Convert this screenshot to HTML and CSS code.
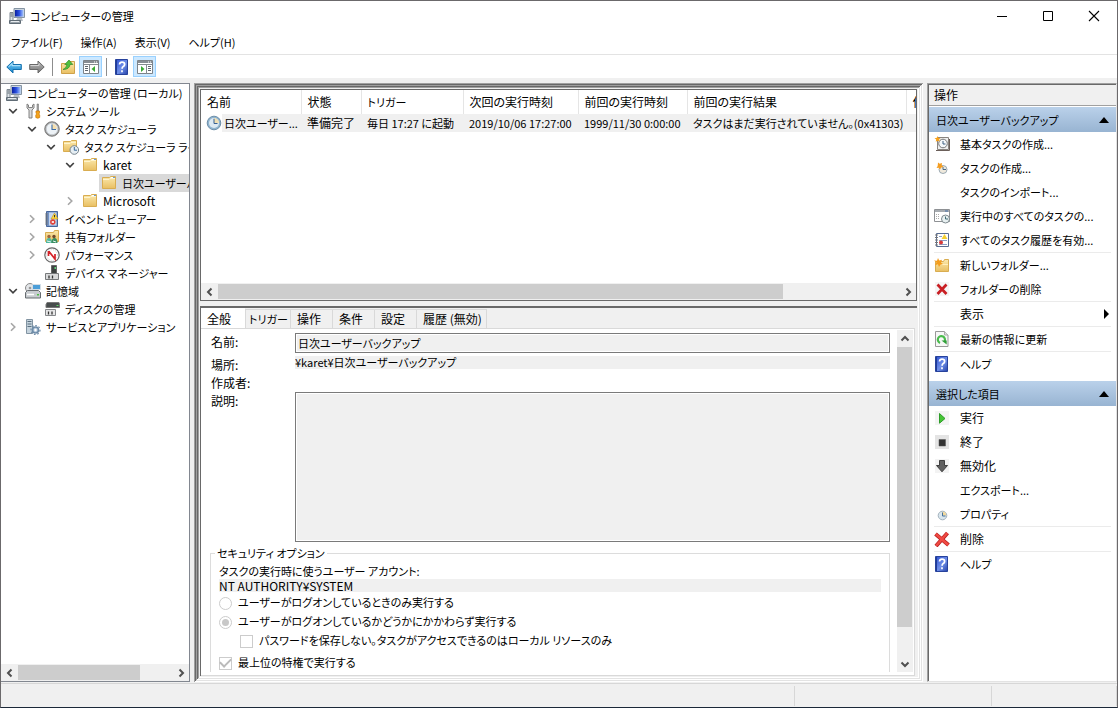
FILE: index.html
```html
<!DOCTYPE html>
<html lang="ja">
<head>
<meta charset="utf-8">
<title>コンピューターの管理</title>
<link rel="stylesheet" href="styles.css">
</head>
<body>
<svg class="defs" aria-hidden="true">
  <defs>
    <linearGradient id="g-folder" x1="0" y1="0" x2="0" y2="1"><stop offset="0" stop-color="#fbe9ad"/><stop offset="1" stop-color="#e9bf62"/></linearGradient>
    <linearGradient id="g-blue" x1="0" y1="0" x2="1" y2="1"><stop offset="0" stop-color="#2b4ed0"/><stop offset=".55" stop-color="#6f8fe8"/><stop offset="1" stop-color="#2442a8"/></linearGradient>
    <linearGradient id="g-screen" x1="0" y1="0" x2="1" y2="0"><stop offset="0" stop-color="#0a1fa0"/><stop offset=".5" stop-color="#2a50e0"/><stop offset="1" stop-color="#a8c8ff"/></linearGradient>
    <linearGradient id="g-arrow" x1="0" y1="0" x2="0" y2="1"><stop offset="0" stop-color="#7cd0f5"/><stop offset="1" stop-color="#1583cc"/></linearGradient>
    <linearGradient id="g-grey" x1="0" y1="0" x2="0" y2="1"><stop offset="0" stop-color="#b8b8b8"/><stop offset="1" stop-color="#777"/></linearGradient>
  </defs>
  <symbol id="computer" viewBox="0 0 16 16"><path d="M5 .5h10.500v9H5z" fill="#c9d3dc" stroke="#8594a3"/><path d="M6 2h8.500v6.500H6z" fill="url(#g-screen)"/><path d="M1 4.500h3v8H1z" fill="#dfe4e8" stroke="#7d8790"/><path d="M1.500 6h2M1.500 8h2" stroke="#59636c"/><path d="M8 10h5l1 3H7z" fill="#b9c0c7"/><path d="M.5 12.500h11v3H.5z" fill="#98a2aa" stroke="#5f6b75"/><path d="M2 13.500h8" stroke="#e7ebee"/></symbol>
  <symbol id="tools" viewBox="0 0 16 16"><path d="M2 1v4l2 2v8h3V7l2-2V1L7.500 2v2.500h-4V2z" fill="#dadada" stroke="#777" stroke-width=".9"/><path d="M12 1h1.500v7H12z" fill="#aaa" stroke="#666" stroke-width=".5"/><path d="M11 8h3.500v2l-.7 1 .9 1v2.500q-1.900 1.500-3.900 0V12l.9-1-.7-1z" fill="#f5a41c" stroke="#c97708" stroke-width=".7"/></symbol>
  <symbol id="clock" viewBox="0 0 16 16"><circle cx="8" cy="8" r="7.300" fill="#9b9b9b" stroke="#6f6f6f" stroke-width=".8"/><circle cx="8" cy="8" r="5.800" fill="#edf2f6" stroke="#c8cdd1"/><path d="M8 8V3a5 5 0 0 1 5 5z" fill="#f6dfae"/><path d="M8 3.500V8.500h4" fill="none" stroke="#3d6da8" stroke-width="1.100"/></symbol>
  <symbol id="clock-blue" viewBox="0 0 16 16"><circle cx="8" cy="8" r="6.800" fill="#8fb4cf" stroke="#6d8ea9"/><circle cx="8" cy="8" r="5" fill="#dce9f3"/><path d="M8 8V3a5 5 0 0 1 5 5z" fill="#efdfb4"/><path d="M8 3.800V8.500h3.500" fill="none" stroke="#355f92"/></symbol>
  <symbol id="folder" viewBox="0 0 16 16"><path d="M1.500 2.500h7l1-1h5v12h-13z" fill="url(#g-folder)" stroke="#d9ad51"/><path d="M2 4.500h6l1-1h5" fill="none" stroke="#fff4cc"/><path d="M10 2.500h4" stroke="#fff"/><path d="M12 2.500h2" stroke="#6b9bd0"/></symbol>
  <symbol id="folder-clock" viewBox="0 0 16 16"><path d="M.5 2.500h7l1-1h5v11H.5z" fill="url(#g-folder)" stroke="#d9ad51"/><path d="M1 4.500h6l1-1h5" fill="none" stroke="#fff4cc"/><circle cx="11.300" cy="11" r="4.300" fill="#e6eef3" stroke="#78858e"/><path d="M11.300 8v3.200H14" fill="none" stroke="#386899"/></symbol>
  <symbol id="events" viewBox="0 0 16 16"><path d="M2.500.5h11v15h-11z" fill="#7293c7" stroke="#46669c"/><path d="M5 1.500h7.500v13H5z" fill="#c4d5ee"/><path d="M1 3h3M1 5h3M1 7h3M1 9h3M1 11h3M1 13h3" stroke="#777" stroke-width=".9"/><path d="M10.500 2l3.500 6H7z" fill="#ffd83b" stroke="#b8962a" stroke-width=".6"/><path d="M10.500 4v2.300" stroke="#333"/><circle cx="8.800" cy="11" r="2.700" fill="#df3c35"/><path d="M7.700 9.900l2.200 2.200m0-2.200l-2.200 2.200" stroke="#fff"/></symbol>
  <symbol id="shared" viewBox="0 0 16 16"><path d="M1.500 3.500h8l1-2h4v11h-13z" fill="url(#g-folder)" stroke="#d9ad51"/><circle cx="5" cy="7.500" r="1.700" fill="#9f683f"/><circle cx="10" cy="7.500" r="1.700" fill="#6f4a2c"/><path d="M2 14q0-5 3-5t3 5z" fill="#4fb7a0"/><path d="M7.500 14q0-5 3-5t3 5z" fill="#3a8e62"/><path d="M3 12l4 1m2-1l3 1" stroke="#e7f6f0"/></symbol>
  <symbol id="gauge" viewBox="0 0 16 16"><circle cx="8" cy="8" r="7.200" fill="#fff" stroke="#666" stroke-width="1.200"/><circle cx="8" cy="8" r="5.400" fill="none" stroke="#ccc" stroke-dasharray="1 1"/><path d="M4.500 4v5M5 4.500L11 12V7" fill="none" stroke="#d42228" stroke-width="1.700"/></symbol>
  <symbol id="device" viewBox="0 0 16 16"><path d="M7.500.5h5v8h-5z" fill="#3d4140" stroke="#666"/><path d="M10.500 2h1.500v2h-1.500z" fill="#64d17b"/><path d="M1.500 8.500h13v6h-13z" fill="#d9dadb" stroke="#77797b"/><path d="M5 10.500v3M8.500 10.500v3" stroke="#333" stroke-width="1.300"/></symbol>
  <symbol id="storage" viewBox="0 0 16 16"><circle cx="5" cy="5" r="4.500" fill="#e2e5e8" stroke="#888"/><circle cx="5" cy="5" r="1.300" fill="#999"/><path d="M7.500 1.500h8v5h-8z" fill="#4c9ed8" stroke="#d4dde4"/><path d="M.5 9.500l2-2h11l2 2v5.500H.5z" fill="#c8ccd0" stroke="#676c70"/><path d="M2 11.500h7" stroke="#fff" stroke-width="1.500"/><path d="M12 11h2v1.500h-2z" fill="#4bbd43"/></symbol>
  <symbol id="disk" viewBox="0 0 16 16"><path d="M2 3.500l1-2h12l.5 2v3H2z" fill="#484c4d" stroke="#777"/><path d="M12.500 4.500h2" stroke="#5fd865"/><path d="M1.500 8.500h10v6h-10z" fill="#e5e5e6" stroke="#85878a"/><path d="M4.500 10.500v3M8 10.500v3" stroke="#333" stroke-width="1.300"/></symbol>
  <symbol id="services" viewBox="0 0 16 16"><path d="M1.500.5h6v14h-6z" fill="#c5d3dd" stroke="#8294a2"/><path d="M2.500 2.500h4M2.500 5h4M2.500 7.500h4" stroke="#5b7080"/><circle cx="10.500" cy="11" r="3" fill="#b6cadd" stroke="#6e8ca8" stroke-width="1.600"/><circle cx="10.500" cy="11" r="4.500" fill="none" stroke="#6e8ca8" stroke-width="1.200" stroke-dasharray="1.700 1.700"/><circle cx="10.500" cy="11" r="1.200" fill="#fff"/></symbol>
  <symbol id="down" viewBox="0 0 12 12"><path d="M2.200 4L6 7.800 9.800 4" fill="none" stroke="#404040" stroke-width="1.700"/></symbol>
  <symbol id="right" viewBox="0 0 12 12"><path d="M4 2.200L7.800 6 4 9.800" fill="none" stroke="#a6a6a6" stroke-width="1.600"/></symbol>
  <symbol id="back" viewBox="0 0 16 16"><path d="M.8 8L7 2v3.500h8.300v5H7V14z" fill="url(#g-arrow)" stroke="#1570ad"/><path d="M2.800 7.800L6 4.500v2.200h8.300" fill="none" stroke="#b9e8ff"/></symbol>
  <symbol id="forward" viewBox="0 0 16 16"><path d="M15.200 8L9 2v3.500H.7v5H9V14z" fill="url(#g-grey)" stroke="#686868"/><path d="M1.500 6.500H10V4.500" fill="none" stroke="#d5d5d5"/></symbol>
  <symbol id="up" viewBox="0 0 16 16"><path d="M1.500 4.500h7l1.500-2h4.500v12h-13z" fill="url(#g-folder)" stroke="#cfa24a"/><path d="M3 10.500q3.500-1.500 4-5H4.800L9 1l3.800 4.500H10q-.5 5-7 5z" fill="#4fc03e" stroke="#318a27" stroke-width=".7"/></symbol>
  <symbol id="pane-left" viewBox="0 0 16 14"><path d="M.5.5h15v13H.5z" fill="#fff" stroke="#7d8389"/><path d="M1 2h14" stroke="#878d94" stroke-width="2"/><path d="M11 2h1m1 0h1" stroke="#fff"/><path d="M1 4.500h14M6.500 5v9" stroke="#858b91"/><path d="M2 6.500h3M2 8.500h3M2 10.500h3" stroke="#5e666e"/><path d="M12 6v6L8.500 9z" fill="#3aa935"/></symbol>
  <symbol id="pane-right" viewBox="0 0 16 14"><path d="M.5.5h15v13H.5z" fill="#fff" stroke="#7d8389"/><path d="M1 2h14" stroke="#878d94" stroke-width="2"/><path d="M11 2h1m1 0h1" stroke="#fff"/><path d="M1 4.500h14M9.500 5v9" stroke="#858b91"/><path d="M11 6.500h3M11 8.500h3M11 10.500h3" stroke="#5e666e"/><path d="M4 6v6L7.500 9z" fill="#3aa935"/></symbol>
  <symbol id="help" viewBox="0 0 16 16"><path d="M1.500.5h12v15h-12z" fill="url(#g-blue)" stroke="#27429c"/><path d="M2.500 1v14" stroke="#203c96"/><path d="M5.500 5.500Q5.700 3.200 8 3.200q2.600 0 2.600 2.200 0 1.400-1.400 2.100-1.100.6-1.100 2.300M8 11.300v2" fill="none" stroke="#fff" stroke-width="1.700"/></symbol>
  <symbol id="basic-task" viewBox="0 0 16 16"><path d="M3.500 1.500h11v12h-11z" fill="#efefef" stroke="#8a8580"/><path d="M2 14.500h13.500V3" fill="none" stroke="#6b5f59"/><circle cx="9" cy="7.500" r="4.300" fill="#f5f8fa" stroke="#777"/><path d="M9 5v3h2.500" fill="none" stroke="#3c5e80"/><path d="M3.500 0l.9 1.900 2.100.1-1.400 1.600.6 2.100-2-1-2 1 .5-2.100L.5 2l2.100-.1z" fill="#f8a21b"/></symbol>
  <symbol id="new-task" viewBox="0 0 16 16"><circle cx="9" cy="9.500" r="4" fill="#efe9dc" stroke="#9baab4"/><path d="M9 7v2.500h3" fill="none" stroke="#476887"/><path d="M4 2.500l1.700 1.200L8 3l-.3 2.200L9.500 7l-2.400.5L6 9.500 4.700 7.700 2.500 8l1.200-2z" fill="#f49d21"/></symbol>
  <symbol id="running" viewBox="0 0 16 16"><path d="M.5 1.500h15v12H.5z" fill="#fff" stroke="#8e9194"/><path d="M1 3h14" stroke="#a6abb0" stroke-width="2"/><path d="M11 3h3" stroke="#4871a8"/><path d="M2 6.500h4M2 8.500h4M2 10.500h4" stroke="#aaa" stroke-dasharray="1 1"/><circle cx="11.500" cy="11" r="4" fill="#e8f0f1" stroke="#7d898e"/><path d="M11.500 8.500V11H14" fill="none" stroke="#3f6b75"/></symbol>
  <symbol id="history" viewBox="0 0 16 16"><path d="M2.500 1.500h12v13h-12z" fill="#fff" stroke="#596d92"/><path d="M1 3h3M1 5.500h3M1 8h3M1 10.500h3M1 13h3" stroke="#777"/><path d="M5 4.500h3M5 8.500h8M5 12.500h8" stroke="#8a9dc4"/><path d="M10.500 2l3 5h-6z" fill="#f4cf30"/><circle cx="7" cy="10.500" r="2" fill="#d83a3a"/></symbol>
  <symbol id="new-folder" viewBox="0 0 16 16"><path d="M1.500 4.500h8l1-2h4v12h-13z" fill="url(#g-folder)" stroke="#d9ad51"/><path d="M3 7.500h11" stroke="#fff0bd"/><path d="M4 1l1.200 2.500L8 2.800 7 5.500l2 1.500-2.600.7L5 10 4 7.500 1 8l1.500-2.500L0 3.500l3 .2z" fill="#f49d1d"/></symbol>
  <symbol id="x-small" viewBox="0 0 16 16"><path d="M1 1h14v14H1z" fill="#f5f5f5"/><path d="M3.500 3.500l9 9.500m0-9.500l-9 9.500" stroke="#c91f24" stroke-width="2.700"/></symbol>
  <symbol id="x-large" viewBox="0 0 16 16"><path d="M1.500 3l13 11m-1-12L2 15" stroke="#b72020" stroke-width="4"/><path d="M1.800 3l12.500 11m-1-12L2.200 14.700" stroke="#f04a43" stroke-width="2.500"/></symbol>
  <symbol id="refresh" viewBox="0 0 16 16"><path d="M1.500.5h9l3.500 3.500v11.500H1.500z" fill="#f7f7f7" stroke="#999"/><path d="M10.500.5V4H14" fill="#ddd" stroke="#aaa"/><path d="M6 12A3.600 3.600 0 1 1 10.500 10.500" fill="none" stroke="#4abb4d" stroke-width="2.200"/><path d="M7.500 9.500h5.200v4z" fill="#2f9e38"/></symbol>
  <symbol id="play" viewBox="0 0 16 16"><path d="M1 1h14v14H1z" fill="#f3f4f3"/><path d="M5.500 3.500L11 8.500l-5.500 4.700z" fill="#44c534" stroke="#2d9c28"/></symbol>
  <symbol id="stop" viewBox="0 0 16 16"><path d="M1 1h14v14H1z" fill="#e4e4e4"/><path d="M5 5.500h6.500V12H5z" fill="#333" stroke="#555" stroke-width=".5"/></symbol>
  <symbol id="disable" viewBox="0 0 16 16"><path d="M1 1h14v14H1z" fill="#f3f3f3"/><path d="M5.500 2.500h5v5h3L8 13.800 2.500 7.500h3z" fill="#606060" stroke="#3f3f3f"/></symbol>
  <symbol id="properties" viewBox="0 0 16 16"><circle cx="8.500" cy="9.500" r="4.300" fill="#d9e6ee" stroke="#a3b2bd"/><path d="M8.500 9.500V5.800a3.700 3.700 0 0 1 3.700 3.700z" fill="#f3d99b"/><path d="M8.500 6.500v3.500h3" fill="none" stroke="#44719d"/></symbol>
</svg>

<div class="window">
  <header class="titlebar">
    <svg class="icon"><use href="#computer"/></svg>
    <h1>コンピューターの管理</h1>
    <div class="caption">
      <button aria-label="最小化"><svg viewBox="0 0 12 12"><path d="M1 6.500h10" stroke="#000"/></svg></button>
      <button aria-label="最大化"><svg viewBox="0 0 12 12"><path d="M1.500 1.500h9v9h-9z" fill="none" stroke="#000"/></svg></button>
      <button aria-label="閉じる"><svg viewBox="0 0 12 12"><path d="M1 1l10 10M11 1L1 11" stroke="#000" stroke-width="1.100"/></svg></button>
    </div>
  </header>
  <nav class="menubar">
    <button>ファイル(F)</button><button>操作(A)</button><button>表示(V)</button><button>ヘルプ(H)</button>
  </nav>
  <div class="toolbar">
    <button aria-label="戻る"><svg class="icon"><use href="#back"/></svg></button>
    <button aria-label="進む"><svg class="icon"><use href="#forward"/></svg></button>
    <span class="rule"></span>
    <button aria-label="上へ"><svg class="icon"><use href="#up"/></svg></button>
    <button class="on" aria-label="ツリーの表示"><svg class="icon"><use href="#pane-left"/></svg></button>
    <span class="rule"></span>
    <button aria-label="ヘルプ"><svg class="icon"><use href="#help"/></svg></button>
    <button class="on" aria-label="操作ウィンドウの表示"><svg class="icon"><use href="#pane-right"/></svg></button>
  </div>

  <main class="panes">
    <aside class="tree-pane">
      <ul class="tree">
        <li class="l0"><svg class="icon"><use href="#computer"/></svg><span>コンピューターの管理 (ローカル)</span></li>
        <li class="l1"><svg class="chev"><use href="#down"/></svg><svg class="icon"><use href="#tools"/></svg><span>システム ツール</span></li>
        <li class="l2"><svg class="chev"><use href="#down"/></svg><svg class="icon"><use href="#clock"/></svg><span>タスク スケジューラ</span></li>
        <li class="l3"><svg class="chev"><use href="#down"/></svg><svg class="icon"><use href="#folder-clock"/></svg><span>タスク スケジューラ ライブラリ</span></li>
        <li class="l4"><svg class="chev"><use href="#down"/></svg><svg class="icon"><use href="#folder"/></svg><span class="latin">karet</span></li>
        <li class="l5"><div class="selected"><svg class="icon"><use href="#folder"/></svg><span>日次ユーザーバックアップ</span></div></li>
        <li class="l4"><svg class="chev"><use href="#right"/></svg><svg class="icon"><use href="#folder"/></svg><span class="latin">Microsoft</span></li>
        <li class="l2"><svg class="chev"><use href="#right"/></svg><svg class="icon"><use href="#events"/></svg><span>イベント ビューアー</span></li>
        <li class="l2"><svg class="chev"><use href="#right"/></svg><svg class="icon"><use href="#shared"/></svg><span>共有フォルダー</span></li>
        <li class="l2"><svg class="chev"><use href="#right"/></svg><svg class="icon"><use href="#gauge"/></svg><span>パフォーマンス</span></li>
        <li class="l2"><i class="chev"></i><svg class="icon"><use href="#device"/></svg><span>デバイス マネージャー</span></li>
        <li class="l1"><svg class="chev"><use href="#down"/></svg><svg class="icon"><use href="#storage"/></svg><span>記憶域</span></li>
        <li class="l2"><i class="chev"></i><svg class="icon"><use href="#disk"/></svg><span>ディスクの管理</span></li>
        <li class="l1"><svg class="chev"><use href="#right"/></svg><svg class="icon"><use href="#services"/></svg><span>サービスとアプリケーション</span></li>
      </ul>
      <div class="hscroll">
        <button aria-label="左へ"><svg viewBox="0 0 12 12"><path d="M7.500 2.500L4 6l3.500 3.500"/></svg></button>
        <div class="track"><div class="thumb tree-thumb"></div></div>
        <button aria-label="右へ"><svg viewBox="0 0 12 12"><path d="M4.500 2.500L8 6 4.500 9.500"/></svg></button>
      </div>
    </aside>

    <section class="center">
      <div class="list">
        <div class="list-view">
          <table>
            <colgroup><col class="c-name"><col class="c-state"><col class="c-trigger"><col class="c-next"><col class="c-last"><col class="c-result"><col class="c-author"></colgroup>
            <thead><tr><th>名前</th><th>状態</th><th class="kana">トリガー</th><th>次回の実行時刻</th><th>前回の実行時刻</th><th>前回の実行結果</th><th>作成者</th></tr></thead>
            <tbody><tr><td class="name"><div><svg class="icon"><use href="#clock-blue"/></svg><span>日次ユーザー...</span></div></td><td>準備完了</td><td class="kana">毎日 17:27 に起動</td><td class="kana">2019/10/06 17:27:00</td><td class="kana">1999/11/30 0:00:00</td><td class="kana">タスクはまだ実行されていません。(0x41303)</td><td></td></tr></tbody>
          </table>
        </div>
        <div class="hscroll">
          <button aria-label="左へ"><svg viewBox="0 0 12 12"><path d="M7.500 2.500L4 6l3.500 3.500"/></svg></button>
          <div class="track"><div class="thumb list-thumb"></div></div>
          <button aria-label="右へ"><svg viewBox="0 0 12 12"><path d="M4.500 2.500L8 6 4.500 9.500"/></svg></button>
        </div>
      </div>
      <div class="detail">
        <div class="tabs" role="tablist">
          <button role="tab" class="active" aria-selected="true">全般</button><button role="tab" class="kana">トリガー</button><button role="tab">操作</button><button role="tab">条件</button><button role="tab">設定</button><button role="tab">履歴 (無効)</button>
        </div>
        <div class="tab-page">
          <form class="general">
            <div class="fields">
              <label for="f-name">名前:</label><input id="f-name" class="box" type="text" readonly value="日次ユーザーバックアップ">
              <label for="f-loc">場所:</label><input id="f-loc" class="flat" type="text" readonly value="¥karet¥日次ユーザーバックアップ">
              <span>作成者:</span><span></span>
              <label for="f-desc">説明:</label><textarea id="f-desc" class="box" readonly></textarea>
            </div>
            <fieldset>
              <legend>セキュリティ オプション</legend>
              <label class="account" for="f-acc">タスクの実行時に使うユーザー アカウント:</label>
              <input id="f-acc" class="flat latin" type="text" readonly value="NT AUTHORITY¥SYSTEM">
              <label class="opt"><input type="radio" name="logon" disabled><span>ユーザーがログオンしているときのみ実行する</span></label>
              <label class="opt"><input type="radio" name="logon" checked disabled><span>ユーザーがログオンしているかどうかにかかわらず実行する</span></label>
              <label class="opt nested"><input type="checkbox" disabled><span>パスワードを保存しない。タスクがアクセスできるのはローカル リソースのみ</span></label>
              <label class="opt top"><input type="checkbox" checked disabled><span>最上位の特権で実行する</span></label>
            </fieldset>
          </form>
          <div class="vscroll">
            <button type="button" aria-label="上へ"><svg viewBox="0 0 12 12"><path d="M2.500 7.500L6 4l3.500 3.500"/></svg></button>
            <div class="track"><div class="thumb page-thumb"></div></div>
            <button type="button" aria-label="下へ"><svg viewBox="0 0 12 12"><path d="M2.500 4.500L6 8l3.500-3.500"/></svg></button>
          </div>
        </div>
      </div>
    </section>

    <aside class="actions">
      <h2>操作</h2>
      <h3><span>日次ユーザーバックアップ</span><svg viewBox="0 0 10 6"><path d="M5 0l5 6H0z"/></svg></h3>
      <div class="group">
        <button><svg class="icon"><use href="#basic-task"/></svg>基本タスクの作成...</button>
        <button><svg class="icon"><use href="#new-task"/></svg>タスクの作成...</button>
        <button><i class="icon"></i>タスクのインポート...</button>
        <button><svg class="icon"><use href="#running"/></svg>実行中のすべてのタスクの...</button>
        <button><svg class="icon"><use href="#history"/></svg>すべてのタスク履歴を有効...</button>
        <hr>
        <button><svg class="icon"><use href="#new-folder"/></svg>新しいフォルダー...</button>
        <button><svg class="icon"><use href="#x-small"/></svg>フォルダーの削除</button>
        <hr>
        <button class="kanji"><i class="icon"></i>表示<svg class="sub" viewBox="0 0 5 10"><path d="M0 0l5 5-5 5z"/></svg></button>
        <hr>
        <button><svg class="icon"><use href="#refresh"/></svg>最新の情報に更新</button>
        <hr>
        <button><svg class="icon"><use href="#help"/></svg>ヘルプ</button>
      </div>
      <h3><span>選択した項目</span><svg viewBox="0 0 10 6"><path d="M5 0l5 6H0z"/></svg></h3>
      <div class="group">
        <button class="kanji"><svg class="icon"><use href="#play"/></svg>実行</button>
        <button class="kanji"><svg class="icon"><use href="#stop"/></svg>終了</button>
        <button class="kanji"><svg class="icon"><use href="#disable"/></svg>無効化</button>
        <button><i class="icon"></i>エクスポート...</button>
        <button><svg class="icon"><use href="#properties"/></svg>プロパティ</button>
        <hr>
        <button class="kanji"><svg class="icon"><use href="#x-large"/></svg>削除</button>
        <hr>
        <button><svg class="icon"><use href="#help"/></svg>ヘルプ</button>
      </div>
    </aside>
  </main>
  <footer class="statusbar"><div></div><div></div><div></div></footer>
</div>
</body>
</html>
```
FILE: styles.css
```css
* { box-sizing: border-box; }
body {
  margin: 0;
  font: 11px/18px "Noto Sans CJK JP", sans-serif;
  font-feature-settings: "palt";
  color: #000;
  background: #f0f0f0;
}
button, input, textarea { font: inherit; font-feature-settings: inherit; color: inherit; }
button { margin: 0; padding: 0; border: 0; background: none; white-space: nowrap; }
.defs { position: absolute; width: 0; height: 0; }
.icon { flex: none; width: 16px; height: 16px; }
.latin, .kanji { font-size: 12px; }

.window {
  display: flex;
  flex-direction: column;
  height: 100vh;
  border: 1px solid #6b696b;
  border-bottom-color: #1b2838;
  overflow: hidden;
}

.titlebar { display: flex; align-items: center; height: 29px; padding-left: 8px; gap: 5px; background: #fff; }
.titlebar h1 { flex: 1; margin: 0; font-size: 11px; font-weight: 400; }
.caption { display: flex; }
.caption button { width: 46px; height: 29px; display: grid; place-items: center; }
.caption svg { width: 12px; height: 12px; }

.menubar { display: flex; height: 24px; padding-left: 10px; gap: 18px; background: #fff; }
.toolbar { display: flex; align-items: center; height: 24px; padding-left: 1px; background: #fff; border-top: 1px solid #e3e3e3; }
.toolbar button { display: grid; place-items: center; width: 23px; height: 21px; }
.toolbar .on { background: #cce8ff; border: 1px solid #99d1ff; }
.toolbar .rule { width: 1px; height: 18px; margin: 0 3px 0 4px; background: #8d8d8d; }

.panes {
  flex: 1;
  min-height: 0;
  display: grid;
  grid-template-columns: 189px minmax(0, 1fr) 190px;
  grid-template-rows: minmax(0, 1fr);
  gap: 4px;
  padding-top: 5px;
}

.tree-pane { display: flex; flex-direction: column; min-width: 0; background: #fff; border: 1px solid #828790; border-left: 0; }
.tree { flex: 1; margin: 0; padding: 0; list-style: none; overflow: hidden; }
.tree li { display: flex; align-items: center; gap: 5px; height: 18px; padding-left: 5px; white-space: nowrap; }
.tree .l2 { padding-left: 24px; }
.tree .l3 { padding-left: 43px; }
.tree .l4 { padding-left: 62px; }
.tree .l5 { padding-left: 98px; }
.tree .chev { flex: none; width: 14px; height: 12px; }
.selected { flex: 1; display: flex; align-items: center; gap: 5px; height: 18px; padding-left: 2px; background: #d9d9d9; }

.hscroll { display: flex; height: 17px; background: #f0f0f0; }
.hscroll button { width: 17px; display: grid; place-items: center; }
.hscroll .track, .vscroll .track { flex: 1; }
.hscroll svg, .vscroll svg { width: 12px; height: 12px; fill: none; stroke: #505050; stroke-width: 2; }
.thumb { background: #cdcdcd; }
.hscroll .thumb { height: 15px; margin-top: 1px; }
.tree-thumb { width: 79%; }
.list-thumb { width: 83%; }

.center {
  display: flex;
  flex-direction: column;
  min-width: 0;
  gap: 5px;
  padding: 6px;
  box-shadow:
    inset 1px 1px #a0a0a0, inset -1px -1px #fff,
    inset 2px 2px #696969, inset -2px -2px #e3e3e3,
    inset 3px 3px #a0a0a0, inset -3px -3px #fff,
    inset 4px 4px #696969, inset -4px -4px #e3e3e3,
    inset 5px 5px #a0a0a0, inset -5px -5px #fff;
}
.list { flex: 0 0 212px; display: flex; flex-direction: column; min-width: 0; background: #fff; border: 1px solid #696969; }
.list-view { flex: 1; overflow: hidden; }
table { table-layout: fixed; width: 760px; border-collapse: collapse; font-size: 12px; }
.c-name { width: 100px; }
.c-state { width: 60px; }
.c-trigger { width: 102px; }
.c-next { width: 115px; }
.c-last { width: 109px; }
.c-result { width: 219px; }
th, td { padding: 0 0 0 6px; text-align: left; font-weight: 400; white-space: nowrap; }
th { height: 24px; border-right: 1px solid #e5e5e5; }
td { height: 18px; background: #f0f0f0; }
th.kana, td.kana, .tabs .kana { font-size: 11px; }
td.name { padding: 0; background: #fff; font-size: 11px; }
td.name div { display: flex; align-items: center; padding-left: 5px; }
td.name span { flex: 1; padding-left: 2px; background: #f0f0f0; }

.detail { flex: 1; display: flex; flex-direction: column; min-height: 0; border-top: 2px solid #696969; border-left: 1px solid #696969; }
.tabs { display: flex; align-items: flex-end; height: 20px; font-size: 12px; }
.tabs button { flex: none; width: 42px; height: 19px; padding-left: 6px; text-align: left; border: 1px solid #d9d9d9; border-left: 0; border-bottom: 0; line-height: 18px; }
.tabs .active { width: 45px; height: 20px; background: #fff; border-color: #fff; border-right-color: #d9d9d9; }
.tabs .kana { width: 45px; padding-left: 3px; }
.tabs button:last-child { width: 70px; }
.tab-page { flex: 1; display: flex; min-height: 0; margin-right: 2px; padding: 1px 1px 3px 0; background: #fff; border: 1px solid #d9d9d9; border-left: 0; }
.general { flex: 1; min-width: 0; padding: 3px 7px 0 9px; overflow: hidden; }
.fields { display: grid; grid-template-columns: 85px minmax(0, 1fr); grid-template-rows: 23px 18px 18px 152px; align-items: start; }
.fields label, .fields span { padding-left: 1px; font-size: 12px; }
.box { width: 100%; height: 20px; margin: 0; padding: 0 2px; border: 1px solid #7a7a7a; background: #f0f0f0; outline: 1px solid #fff; outline-offset: -2px; resize: none; }
textarea.box { height: 150px; }
.flat { display: block; width: 100%; height: 13px; margin: 0; padding: 0; border: 0; background: #f0f0f0; line-height: 13px; }
fieldset { margin: 0; padding: 0 8px 40px 8px; min-width: 0; border: 1px solid #dcdcdc; }
legend { margin-left: -4px; padding: 0 2px; }
.account { display: block; height: 17px; }
.opt { display: flex; align-items: center; gap: 6px; height: 19px; white-space: nowrap; }
.nested { padding-left: 21px; }
.top { height: 25px; }
.opt input { appearance: none; flex: none; display: grid; place-items: center; width: 13px; height: 13px; margin: 3px 0 0; border: 1px solid #ccc; background: #fff; }
.opt input[type=radio] { border-radius: 50%; }
.opt input[type=radio]:checked::before { content: ""; width: 7px; height: 7px; border-radius: 50%; background: #c8c8c8; }
.opt input[type=checkbox]:checked::before { content: ""; width: 9px; height: 5px; margin-bottom: 3px; border: solid #bbb; border-width: 0 0 2px 2px; transform: rotate(-45deg); }
.vscroll { display: flex; flex-direction: column; width: 16px; background: #f0f0f0; }
.vscroll button { height: 17px; display: grid; place-items: center; }
.vscroll .thumb { width: 15px; }
.page-thumb { height: 91%; }

.actions { background: #fff; border: 1px solid #a0a0a0; border-right-color: #e3e3e3; border-bottom-color: #e3e3e3; box-shadow: inset 1px 1px #696969; padding: 1px 0 0 1px; min-width: 0; overflow: hidden; }
.actions h2 { margin: 0 0 1px; height: 21px; padding: 1px 0 0 5px; font-size: 12px; font-weight: 400; background: #f0f0f0; border-bottom: 1px solid #a0a0a0; }
.actions h3 { display: flex; align-items: center; justify-content: space-between; margin: 0; height: 25px; padding: 0 7px; font-size: 11px; font-weight: 400; background: linear-gradient(#bad1ea, #98b4d2); }
.actions h3 svg { width: 10px; height: 6px; }
.group { padding-bottom: 5px; }
.group button { display: flex; align-items: center; gap: 10px; width: 100%; height: 24px; padding: 0 7px 0 5px; text-align: left; }
.group hr { height: 1px; margin: 0 5px; border: 0; background: #ebebeb; }
.sub { width: 5px; height: 10px; margin-left: auto; }

.statusbar { flex: none; display: flex; height: 24px; margin-top: 1px; padding: 2px 0 1px; border-top: 1px solid #d7d7d7; }
.statusbar div { border-right: 1px solid #d7d7d7; flex: 0 0 125px; }
.statusbar div:first-child { flex: 1; }
.statusbar div:nth-child(2) { flex-basis: 197px; }
```
